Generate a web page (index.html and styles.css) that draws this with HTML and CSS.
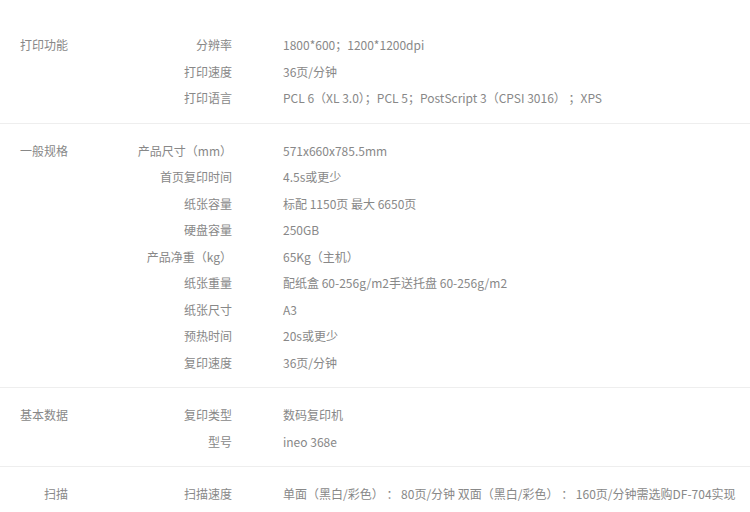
FILE: index.html
```html
<!DOCTYPE html>
<html lang="zh-CN">
<head>
    <meta charset="UTF-8">
    <meta name="viewport" content="width=device-width, initial-scale=1.0">
    <title>参数规格</title>
    <link rel="stylesheet" href="styles.css">
</head>
<body>
    <div class="specs">
        <div class="spec-group">
            <div class="group-title">打印功能</div>
            <div class="group-rows">
                <div class="spec-row"><span class="spec-name">分辨率</span><span class="spec-value">1800*600；1200*1200dpi</span></div>
                <div class="spec-row"><span class="spec-name">打印速度</span><span class="spec-value">36页/分钟</span></div>
                <div class="spec-row"><span class="spec-name">打印语言</span><span class="spec-value">PCL 6（XL 3.0）；PCL 5；PostScript 3（CPSI 3016） ；XPS</span></div>
            </div>
        </div>

        <div class="spec-group">
            <div class="group-title">一般规格</div>
            <div class="group-rows">
                <div class="spec-row"><span class="spec-name">产品尺寸（mm）</span><span class="spec-value">571x660x785.5mm</span></div>
                <div class="spec-row"><span class="spec-name">首页复印时间</span><span class="spec-value">4.5s或更少</span></div>
                <div class="spec-row"><span class="spec-name">纸张容量</span><span class="spec-value">标配 1150页 最大 6650页</span></div>
                <div class="spec-row"><span class="spec-name">硬盘容量</span><span class="spec-value">250GB</span></div>
                <div class="spec-row"><span class="spec-name">产品净重（kg）</span><span class="spec-value">65Kg（主机）</span></div>
                <div class="spec-row"><span class="spec-name">纸张重量</span><span class="spec-value">配纸盒 60-256g/m2手送托盘 60-256g/m2</span></div>
                <div class="spec-row"><span class="spec-name">纸张尺寸</span><span class="spec-value">A3</span></div>
                <div class="spec-row"><span class="spec-name">预热时间</span><span class="spec-value">20s或更少</span></div>
                <div class="spec-row"><span class="spec-name">复印速度</span><span class="spec-value">36页/分钟</span></div>
            </div>
        </div>

        <div class="spec-group">
            <div class="group-title">基本数据</div>
            <div class="group-rows">
                <div class="spec-row"><span class="spec-name">复印类型</span><span class="spec-value">数码复印机</span></div>
                <div class="spec-row"><span class="spec-name">型号</span><span class="spec-value">ineo 368e</span></div>
            </div>
        </div>

        <div class="spec-group">
            <div class="group-title">扫描</div>
            <div class="group-rows">
                <div class="spec-row"><span class="spec-name">扫描速度</span><span class="spec-value">单面（黑白/彩色） ： 80页/分钟 双面（黑白/彩色） ： 160页/分钟需选购DF-704实现</span></div>
            </div>
        </div>
    </div>
</body>
</html>
```

FILE: styles.css
```css
body {
    margin: 0;
    font-family: "Noto Sans CJK SC", "Noto Sans", sans-serif;
    font-size: 12px;
    color: #888;
    background: #fff;
}

.specs {
    padding-top: 18px;
}

.spec-group {
    display: flex;
    padding: 14px 0 11px;
    border-bottom: 1px solid #eee;
    line-height: 26.5px;
}

.group-title {
    width: 68px;
    text-align: right;
    flex-shrink: 0;
}

.group-rows {
    flex: 1;
}

.spec-row {
    display: grid;
    grid-template-columns: 164px 1fr;
    column-gap: 51px;
}

.spec-name {
    text-align: right;
}

.spec-value {
    white-space: nowrap;
}
```
